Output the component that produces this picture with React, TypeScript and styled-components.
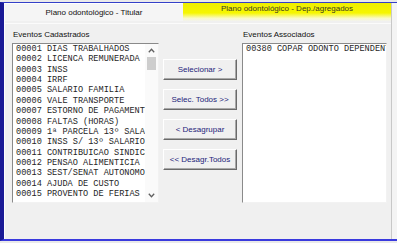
import React from 'react'
import styled, { createGlobalStyle } from 'styled-components'

const GlobalStyle = createGlobalStyle`
  html, body {
    margin: 0;
    padding: 0;
    background: #eaeaea;
  }
  body {
    font-family: 'Liberation Sans', Arial, sans-serif;
  }
`

const cadastrados = [
  '00001 DIAS TRABALHADOS',
  '00002 LICENCA REMUNERADA',
  '00003 INSS',
  '00004 IRRF',
  '00005 SALARIO FAMILIA',
  '00006 VALE TRANSPORTE',
  '00007 ESTORNO DE PAGAMENTO',
  '00008 FALTAS (HORAS)',
  '00009 1ª PARCELA 13º SALARIO',
  '00010 INSS S/ 13º SALARIO',
  '00011 CONTRIBUICAO SINDICAL',
  '00012 PENSAO ALIMENTICIA',
  '00013 SEST/SENAT AUTONOMO',
  '00014 AJUDA DE CUSTO',
  '00015 PROVENTO DE FERIAS',
]

const associados = ['00380 COPAR ODONTO DEPENDENTE']

const buttons = ['Selecionar >', 'Selec. Todos >>', '< Desagrupar', '<< Desagr.Todos']

const Window = styled.div`
  width: 397px;
  height: 243px;
  box-sizing: border-box;
  padding-top: 2px;
  background: #eaeaea;
  overflow: hidden;
`

const Frame = styled.div`
  height: 239px;
  box-sizing: border-box;
  display: flex;
  border-top: 1px solid #3440c8;
  border-left: 4px solid #1a1a96;
  border-bottom: 2px solid #3a3ade;
  background: #f4f4f4;
`

const Panel = styled.div`
  width: 388px;
  flex: none;
  display: flex;
  flex-direction: column;
  box-sizing: border-box;
  border-left: 1px solid #fdfdfd;
  border-right: 1px solid #c8c8c8;
  background: #f0f0f0;
`

const TabRow = styled.div`
  display: flex;
  height: 18px;
`

const Tab = styled.div<{ $active?: boolean }>`
  display: flex;
  justify-content: center;
  align-items: ${(p) => (p.$active ? 'flex-start' : 'center')};
  font-size: 8px;
  line-height: ${(p) => (p.$active ? '12px' : '18px')};
  color: ${(p) => (p.$active ? '#3a3a20' : '#111')};
  box-sizing: border-box;
  ${(p) =>
    p.$active
      ? `
    flex: 1;
    background: linear-gradient(#eeee00 0%, #f6f600 55%, #fafac8 85%, #f2f2ee 100%);
  `
      : `
    width: 178px;
    flex: none;
    background: #f5f5f5;
    border-top: 1px solid #fff;
  `}
`

const Content = styled.div`
  flex: 1;
  display: flex;
  padding: 5px 0 0 7px;
  border-top: 1px solid #fbfbfb;
  margin-top: 2px;
`

const Column = styled.div<{ $width: number }>`
  width: ${(p) => p.$width}px;
  flex: none;
  display: flex;
  flex-direction: column;
`

const Label = styled.div`
  font-size: 8px;
  line-height: 11px;
  height: 11px;
  padding-left: 1px;
  color: #111;
`

const ListBox = styled.div`
  margin-top: 3px;
  height: 160px;
  box-sizing: border-box;
  display: flex;
  background: #fff;
  border: 1px solid;
  border-color: #8a8a8a #f2f2f2 #f2f2f2 #8a8a8a;
`

const Rows = styled.div`
  flex: 1;
  min-width: 0;
  overflow: hidden;
  padding-left: 3px;
`

const Row = styled.div`
  font-family: 'Liberation Mono', 'Courier New', monospace;
  font-size: 8.6px;
  line-height: 10.36px;
  color: #262626;
  white-space: pre;
`

const ScrollBar = styled.div`
  width: 13px;
  flex: none;
  display: flex;
  flex-direction: column;
  background: #fafafa;
`

const Arrow = styled.div`
  height: 13px;
  display: flex;
  align-items: center;
  justify-content: center;
`

const Thumb = styled.div`
  height: 13px;
  margin: 0 2px;
  background: #cdcdcd;
`

const Track = styled.div`
  flex: 1;
`

const ButtonColumn = styled.div`
  width: 74px;
  flex: none;
  display: flex;
  flex-direction: column;
  gap: 9px;
  padding-top: 30px;
  margin: 0 5px 0 4px;
`

const Button = styled.button`
  height: 21px;
  padding: 0;
  font-family: 'Liberation Sans', Arial, sans-serif;
  font-size: 8px;
  color: #23237a;
  background: #f0f0f0;
  border: 1px solid;
  border-color: #fff #6a6a6a #6a6a6a #fff;
  box-shadow: inset -1px -1px 0 #a8a8a8;
`

const Chevron = ({ up }: { up?: boolean }) => (
  <svg width="7" height="5" viewBox="0 0 7 5">
    <path
      d={up ? 'M0.8 4.2 L3.5 1.2 L6.2 4.2' : 'M0.8 0.8 L3.5 3.8 L6.2 0.8'}
      fill="none"
      stroke="#606060"
      strokeWidth="1.3"
    />
  </svg>
)

export default function App() {
  return (
    <>
      <GlobalStyle />
      <Window>
        <Frame>
          <Panel>
            <TabRow>
              <Tab>Plano odontológico - Titular</Tab>
              <Tab $active>Plano odontológico - Dep./agregados</Tab>
            </TabRow>
            <Content>
              <Column $width={147}>
                <Label>Eventos Cadastrados</Label>
                <ListBox>
                  <Rows>
                    {cadastrados.map((item) => (
                      <Row key={item}>{item}</Row>
                    ))}
                  </Rows>
                  <ScrollBar>
                    <Arrow>
                      <Chevron up />
                    </Arrow>
                    <Thumb />
                    <Track />
                    <Arrow>
                      <Chevron />
                    </Arrow>
                  </ScrollBar>
                </ListBox>
              </Column>
              <ButtonColumn>
                {buttons.map((b) => (
                  <Button key={b}>{b}</Button>
                ))}
              </ButtonColumn>
              <Column $width={145}>
                <Label>Eventos Associados</Label>
                <ListBox>
                  <Rows>
                    {associados.map((item) => (
                      <Row key={item}>{item}</Row>
                    ))}
                  </Rows>
                </ListBox>
              </Column>
            </Content>
          </Panel>
        </Frame>
      </Window>
    </>
  )
}
